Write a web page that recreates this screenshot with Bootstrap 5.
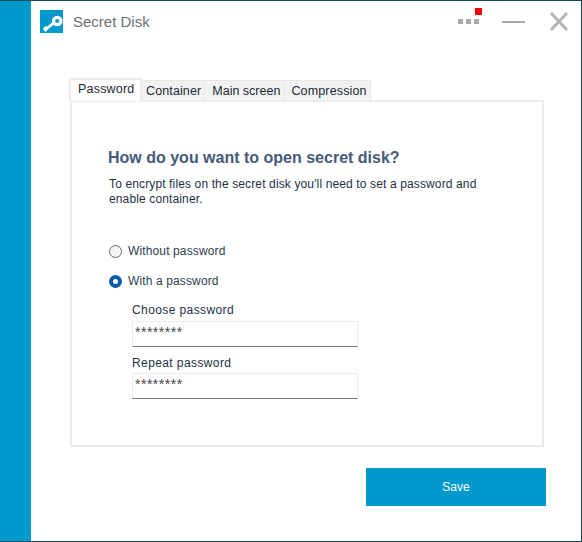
<!DOCTYPE html>
<html lang="en">
<head>
<meta charset="utf-8">
<title>Secret Disk</title>
<link href="https://cdn.jsdelivr.net/npm/bootstrap@5.3.0/dist/css/bootstrap.min.css" rel="stylesheet">
<style>
html,body{height:100%;margin:0;background:#fff}
body{font-family:"Liberation Sans",Arial,sans-serif;font-size:12px;color:#1c3148;overflow:hidden}
.win{width:582px;height:542px;border:1px solid #0d4f5e;border-left:0;display:flex;background:#fff}
.rail{width:31px;flex:none;background:#0099cc}
.pane{flex:1;display:flex;flex-direction:column;min-width:0}
.topbar{height:77px;flex:none;display:flex;align-items:flex-start;padding:9px 0 0 9px}
.logo{width:23px;height:23px;display:block;flex:none}
.appname{font-size:15px;line-height:24px;margin-left:10px;color:#6d7074}
.ctrls{margin-left:auto;margin-top:-9px;line-height:0}
.tabs-wrap{margin-left:38px;width:475px}
.nav-tabs.sd-tabs{border:0;flex-wrap:nowrap;align-items:flex-end;gap:0;margin:0;position:relative;z-index:1}
.sd-tabs .nav-link{border:1px solid #e6e6e6;border-left:0;border-bottom:0;border-radius:0;margin:0;background:#f2f2f2;color:#1c2a38;font-size:12.5px;line-height:16px;padding:2px 3px 1px 4px;height:20px;letter-spacing:.12px;white-space:nowrap}
.sd-tabs .nav-item:nth-child(3) .nav-link{padding-left:7px;padding-right:4px;letter-spacing:0}
.sd-tabs .nav-item:nth-child(4) .nav-link{padding-left:6px;padding-right:3px;letter-spacing:.15px}
.sd-tabs .nav-link.active{background:#fff;border:2px solid #ececec;border-bottom:0;color:#1c2a38;height:23px;padding:1px 6px 0 7px;margin-bottom:-1px;width:73px;letter-spacing:.2px}
.panel{margin-left:1px;width:474px;height:347px;border:2px solid #ececec;background:#fff;padding:46px 36px 0 36px}
.q{font-size:16px;font-weight:700;line-height:20px;color:#465a78;margin:0 0 9px}
.desc{font-size:12px;line-height:15px;color:#1c3148;margin:0 0 36px 1px;letter-spacing:.13px}
.form-check.opt{min-height:16px;margin:0 0 14px;line-height:16px;display:flex;align-items:center;gap:6px;padding:0 0 0 1px}
.opt .form-check-input{float:none;margin:0;width:13px;height:13px;flex:none;border:1px solid #6a6a6a;background-color:#f4f4f4}
.opt .form-check-input:checked{background-color:#fff;border:4px solid #0b5cad;background-image:none}
.opt .form-check-label{font-size:12px;letter-spacing:.13px;color:#2c3e50;opacity:1}
.fields{margin-left:24px;width:226px}
.fld-label{display:block;font-size:12px;line-height:15px;margin:0 0 3px;letter-spacing:.4px;color:#1c3148}
.fld-label.second{padding-top:1px;margin-bottom:2px}
.form-control.fld{height:26px;width:226px;border:1px solid #ececec;border-bottom:1px solid #777;border-radius:0;padding:0 0 5px 2px;font-family:"Liberation Sans",Arial,sans-serif;font-size:14px;line-height:14px;letter-spacing:.5px;color:#444;box-shadow:none;margin-bottom:8px}
.foot{display:flex;justify-content:flex-end;padding:21px 35px 0 0}
.btn.save{width:180px;height:38px;background:#0099cc;border:0;border-radius:0;color:#fff;font-size:12px;padding:0}
</style>
</head>
<body>
<div class="win">
  <div class="rail"></div>
  <div class="pane">
    <div class="topbar">
      <svg class="logo" viewBox="0 0 23 23" aria-hidden="true">
        <rect width="23" height="23" fill="#0099cc"/>
        <path d="M6.5 21 L4.5 19 L6 17.5 L7 18.5 L13.5 13" fill="none" stroke="#fff" stroke-width="2.6" stroke-linejoin="round"/>
        <circle cx="17.2" cy="11" r="3.7" fill="none" stroke="#fff" stroke-width="3.2"/>
      </svg>
      <div class="appname">Secret Disk</div>
      <div class="ctrls">
        <svg width="125" height="32" viewBox="0 0 125 32" aria-hidden="true">
          <rect x="2" y="18" width="5" height="5" fill="#a9a9a9"/>
          <rect x="10" y="18" width="5" height="5" fill="#a9a9a9"/>
          <rect x="18" y="18" width="5" height="5" fill="#a9a9a9"/>
          <rect x="19" y="7" width="7" height="7" fill="#f00000"/>
          <rect x="46" y="20" width="23" height="2" fill="#a9a9a9"/>
          <path d="M95 12 L111 29 M111 12 L95 29" fill="none" stroke="#b5b5b5" stroke-width="3"/>
        </svg>
      </div>
    </div>
    <div class="tabs-wrap">
      <ul class="nav nav-tabs sd-tabs">
        <li class="nav-item"><a class="nav-link active" href="#">Password</a></li>
        <li class="nav-item"><a class="nav-link" href="#">Container</a></li>
        <li class="nav-item"><a class="nav-link" href="#">Main screen</a></li>
        <li class="nav-item"><a class="nav-link" href="#">Compression</a></li>
      </ul>
      <div class="panel">
        <h1 class="q">How do you want to open secret disk?</h1>
        <p class="desc">To encrypt files on the secret disk you'll need to set a password and enable container.</p>
        <div class="form-check opt">
          <input class="form-check-input" type="radio" name="pw" id="r1">
          <label class="form-check-label" for="r1">Without password</label>
        </div>
        <div class="form-check opt">
          <input class="form-check-input" type="radio" name="pw" id="r2" checked>
          <label class="form-check-label" for="r2">With a password</label>
        </div>
        <div class="fields">
          <label class="fld-label" for="p1">Choose password</label>
          <input class="form-control fld" id="p1" type="text" value="********">
          <label class="fld-label second" for="p2">Repeat password</label>
          <input class="form-control fld" id="p2" type="text" value="********">
        </div>
      </div>
    </div>
    <div class="foot"><button class="btn save" type="button">Save</button></div>
  </div>
</div>
<script src="https://cdn.jsdelivr.net/npm/bootstrap@5.3.0/dist/js/bootstrap.bundle.min.js"></script>
</body>
</html>
